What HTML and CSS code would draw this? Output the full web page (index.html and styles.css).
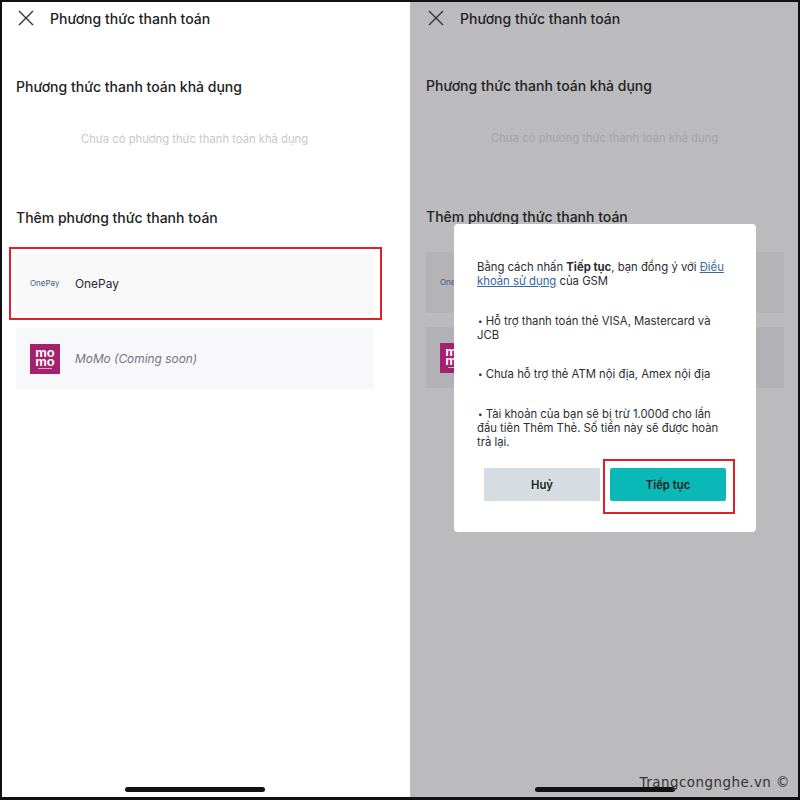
FILE: index.html
```html
<!DOCTYPE html>
<html lang="en">
<head>
    <meta charset="UTF-8">
    <meta name="viewport" content="width=device-width, initial-scale=1.0">
    <title>Phương thức thanh toán</title>
    <link rel="stylesheet" href="styles.css">
</head>
<body>
    <div class="frame">
        <section class="phone">
            <header class="topbar">
                <svg class="close-icon" viewBox="0 0 16 16" width="16" height="16"><path d="M1 1 15 15M15 1 1 15" stroke="#333" stroke-width="1.4" fill="none"/></svg>
                <h1>Phương thức thanh toán</h1>
            </header>
            <h2 class="section-title first">Phương thức thanh toán khả dụng</h2>
            <p class="empty">Chưa có phương thức thanh toán khả dụng</p>
            <h2 class="section-title second">Thêm phương thức thanh toán</h2>
            <div class="methods">
                <div class="method highlighted">
                    <span class="logo onepay">OnePay</span>
                    <span class="method-name">OnePay</span>
                </div>
                <div class="method muted">
                    <span class="logo momo"><b>mo</b><b>mo</b><i></i></span>
                    <span class="method-name">MoMo (Coming soon)</span>
                </div>
            </div>
            <div class="home-bar"></div>
        </section>

        <section class="phone dimmed">
            <header class="topbar">
                <svg class="close-icon" viewBox="0 0 16 16" width="16" height="16"><path d="M1 1 15 15M15 1 1 15" stroke="#333" stroke-width="1.4" fill="none"/></svg>
                <h1>Phương thức thanh toán</h1>
            </header>
            <h2 class="section-title first">Phương thức thanh toán khả dụng</h2>
            <p class="empty">Chưa có phương thức thanh toán khả dụng</p>
            <h2 class="section-title second">Thêm phương thức thanh toán</h2>
            <div class="methods">
                <div class="method">
                    <span class="logo onepay">OnePay</span>
                </div>
                <div class="method muted">
                    <span class="logo momo"><b>mo</b><b>mo</b><i></i></span>
                </div>
            </div>
            <div class="home-bar"></div>

            <div class="dialog">
                <p>Bằng cách nhấn <strong>Tiếp tục</strong>, bạn đồng ý với <a href="#">Điều khoản sử dụng</a> của GSM</p>
                <p><span class="dot">•</span> Hỗ trợ thanh toán thẻ VISA, Mastercard và JCB</p>
                <p><span class="dot">•</span> Chưa hỗ trợ thẻ ATM nội địa, Amex nội địa</p>
                <p><span class="dot">•</span> Tài khoản của bạn sẽ bị trừ 1.000đ cho lần đầu tiên Thêm Thẻ. Số tiền này sẽ được hoàn trả lại.</p>
                <div class="dialog-actions">
                    <button class="btn cancel">Huỷ</button>
                    <button class="btn confirm">Tiếp tục</button>
                </div>
            </div>
            <div class="watermark">Trangcongnghe.vn ©</div>
        </section>
    </div>
</body>
</html>
```

FILE: styles.css
```css
* {
    margin: 0;
    padding: 0;
    box-sizing: border-box;
}

body {
    width: 800px;
    height: 800px;
    overflow: hidden;
    font-family: Inter, "Liberation Sans", sans-serif;
    background-color: #111;
}

.frame {
    display: flex;
    height: 795px;
    margin: 2px;
}

.phone {
    position: relative;
    width: 408px;
    background-color: #fff;
    color: #222;
}

.phone.dimmed {
    width: 388px;
    background-color: #bbbabd;
}

.topbar {
    display: flex;
    align-items: center;
    gap: 16px;
    height: 32px;
    padding-left: 16px;
}

.dimmed .topbar {
    padding-left: 18px;
}

.topbar h1 {
    font-size: 14px;
    font-weight: 500;
}

.section-title {
    font-size: 14px;
    font-weight: 500;
    padding-left: 14px;
}

.dimmed .section-title {
    padding-left: 16px;
}

.section-title.first {
    margin-top: 44px;
}

.dimmed .section-title.first {
    margin-top: 43px;
}

.section-title.second {
    margin-top: 63px;
}

.empty {
    margin-top: 37px;
    padding-left: 79px;
    font-size: 11.25px;
    color: #c9c8cc;
}

.dimmed .empty {
    padding-left: 81px;
    color: #a5a3a7;
}

.methods {
    display: flex;
    flex-direction: column;
    gap: 14px;
    margin: 27px 0 0 14px;
    width: 358px;
}

.dimmed .methods {
    margin-left: 16px;
}

.method {
    display: flex;
    align-items: center;
    gap: 15px;
    height: 61px;
    padding-left: 14px;
    background-color: #f9f8f9;
    font-size: 11.9px;
}

.dimmed .method {
    background-color: #b4b3b6;
}

.method.muted {
    background-color: #f8f7fa;
    color: #77757a;
    font-style: italic;
}

.dimmed .method.muted {
    background-color: #b2b1b5;
}

.method.highlighted {
    position: relative;
    color: #2b2b30;
}

.method.highlighted::after {
    content: "";
    position: absolute;
    inset: -6px -8px -6px -7px;
    border: 2px solid #de2027;
}

.logo {
    display: block;
    width: 30px;
    flex-shrink: 0;
}

.onepay {
    margin-top: -2px;
    font-size: 8px;
    color: #3a5a8c;
    white-space: nowrap;
}

.momo {
    display: flex;
    flex-direction: column;
    align-items: center;
    justify-content: center;
    height: 30px;
    background-color: #a3216f;
    color: #fff;
    font-family: "Liberation Sans", sans-serif;
    font-size: 13px;
    font-style: normal;
    line-height: 9px;
}

.momo i {
    width: 14px;
    height: 1px;
    margin-top: 2px;
    background-color: #d9a3c4;
}

.home-bar {
    position: absolute;
    left: 123px;
    bottom: 5px;
    width: 140px;
    height: 5px;
    border-radius: 3px;
    background-color: #111;
}

.dimmed .home-bar {
    left: 125px;
}

.dialog {
    position: absolute;
    top: 222px;
    left: 44px;
    width: 302px;
    height: 308px;
    padding: 36px 28px 0 23px;
    border-radius: 4px;
    background-color: #fff;
    font-size: 11.3px;
    line-height: 14px;
    color: #2c2c30;
}

.dialog p {
    margin-bottom: 25.6px;
}

.dialog p:nth-of-type(4) {
    margin-bottom: 0;
}

.dialog a {
    color: #3566a6;
}

.dot {
    margin-left: 1px;
    font-size: 8px;
    line-height: 0;
    vertical-align: 1px;
}

.dialog-actions {
    position: absolute;
    left: 30px;
    top: 244px;
    display: flex;
    gap: 10px;
}

.btn {
    position: relative;
    width: 116px;
    height: 33px;
    border: none;
    font-family: inherit;
    font-size: 11.3px;
    font-weight: 600;
    color: #222;
}

.btn.cancel {
    background-color: #d5dce2;
}

.btn.confirm {
    border-radius: 2px;
    background-color: #0bb8b8;
}

.btn.confirm::after {
    content: "";
    position: absolute;
    inset: -9px -9px -13px -7px;
    border: 2px solid #de2027;
}

.watermark {
    position: absolute;
    right: 8px;
    bottom: 7px;
    font-family: "DejaVu Sans", sans-serif;
    font-size: 13.4px;
    letter-spacing: 0.5px;
    color: #333;
}
```
